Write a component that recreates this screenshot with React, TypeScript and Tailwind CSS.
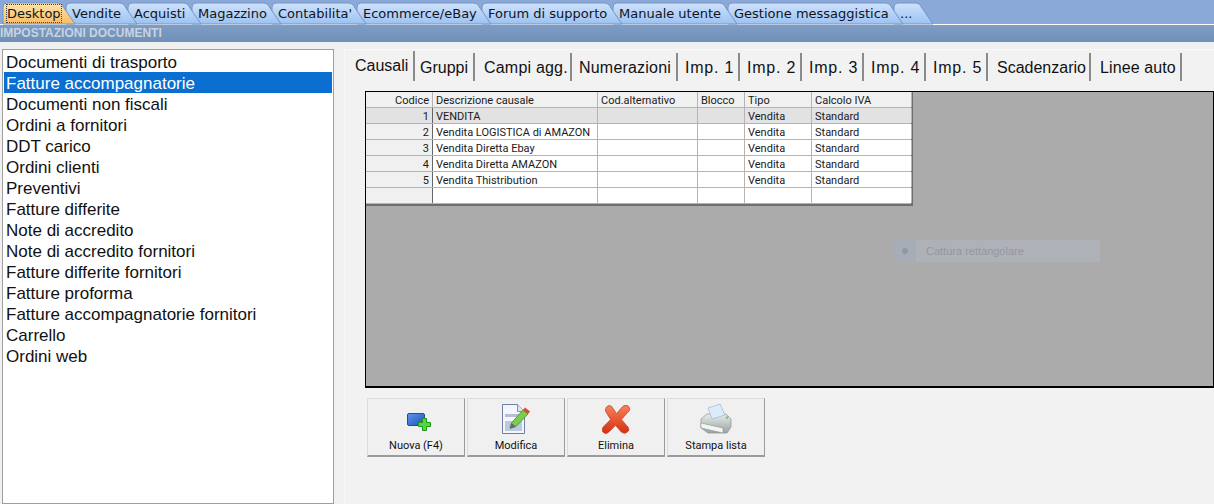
import type { ReactNode } from 'react'

const mainTabs = [
  { label: 'Desktop', w: 63 },
  { label: 'Vendite', w: 62 },
  { label: 'Acquisti', w: 64 },
  { label: 'Magazzino', w: 80 },
  { label: "Contabilita'", w: 85 },
  { label: 'Ecommerce/eBay', w: 125 },
  { label: 'Forum di supporto', w: 131 },
  { label: 'Manuale utente', w: 115 },
  { label: 'Gestione messaggistica', w: 166 },
  { label: '...', w: 30 },
]

const docs = [
  'Documenti di trasporto',
  'Fatture accompagnatorie',
  'Documenti non fiscali',
  'Ordini a fornitori',
  'DDT carico',
  'Ordini clienti',
  'Preventivi',
  'Fatture differite',
  'Note di accredito',
  'Note di accredito fornitori',
  'Fatture differite fornitori',
  'Fatture proforma',
  'Fatture accompagnatorie fornitori',
  'Carrello',
  'Ordini web',
]

const subTabs = [
  { label: 'Causali', cls: 'w-[65px] pl-[5px]' },
  { label: 'Gruppi', cls: 'w-[60px] pl-[5px]' },
  { label: 'Campi agg.', cls: 'w-[97px] pl-[9px] tracking-[0.2px]' },
  { label: 'Numerazioni', cls: 'w-[106px] pl-[7px] tracking-[0.2px]' },
  { label: 'Imp. 1', cls: 'w-[62px] pl-[7px] tracking-[0.8px]' },
  { label: 'Imp. 2', cls: 'w-[62px] pl-[7px] tracking-[0.8px]' },
  { label: 'Imp. 3', cls: 'w-[62px] pl-[7px] tracking-[0.8px]' },
  { label: 'Imp. 4', cls: 'w-[62px] pl-[7px] tracking-[0.8px]' },
  { label: 'Imp. 5', cls: 'w-[62px] pl-[7px] tracking-[0.8px]' },
  { label: 'Scadenzario', cls: 'w-[103px] pl-[9px]' },
  { label: 'Linee auto', cls: 'w-[91px] pl-[9px] tracking-[0.1px]' },
]

const rows = [
  ['1', 'VENDITA', '', '', 'Vendita', 'Standard'],
  ['2', 'Vendita LOGISTICA di AMAZON', '', '', 'Vendita', 'Standard'],
  ['3', 'Vendita Diretta Ebay', '', '', 'Vendita', 'Standard'],
  ['4', 'Vendita Diretta AMAZON', '', '', 'Vendita', 'Standard'],
  ['5', 'Vendita Thistribution', '', '', 'Vendita', 'Standard'],
  ['', '', '', '', '', ''],
]

const colWidths = ['w-[67px]', 'w-[165px]', 'w-[100px]', 'w-[47px]', 'w-[67px]', 'w-[100px]']
const headers = ['Codice', 'Descrizione causale', 'Cod.alternativo', 'Blocco', 'Tipo', 'Calcolo IVA']

function MainTab({ label, w, index }: { label: string; w: number; index: number }) {
  const h = 22
  const active = index === 0
  const d = `M0 ${h} L0 5 Q0 1 4 1 L${w - 8} 1 Q${w - 4} 1 ${w - 2} 6 L${w + 9} ${h} Z`
  return (
    <div className="relative h-[22px] shrink-0" style={{ width: w, zIndex: 20 - index }}>
      <svg className="absolute left-0 top-0 overflow-visible" width={w + 10} height={h}>
        <defs>
          <linearGradient id="tabBlue" x1="0" y1="0" x2="0" y2="1">
            <stop offset="0" stopColor="#cfe2fb" />
            <stop offset="1" stopColor="#9cc2f2" />
          </linearGradient>
          <linearGradient id="tabOrange" x1="0" y1="0" x2="0" y2="1">
            <stop offset="0" stopColor="#fde3ae" />
            <stop offset="1" stopColor="#f9bd62" />
          </linearGradient>
        </defs>
        <path d={d} fill={active ? 'url(#tabOrange)' : 'url(#tabBlue)'} stroke="#7595c4" strokeWidth="1" />
      </svg>
      <span
        className={`absolute top-[3px] whitespace-nowrap text-[13px] leading-[17px] text-[#10151c] ${
          active ? 'left-[4px] outline-1 outline-dotted outline-[#444]' : 'left-[6px]'
        }`}
      >
        {label}
      </span>
    </div>
  )
}

function GridCell({ w, className, children }: { w: string; className?: string; children?: ReactNode }) {
  return (
    <div className={`${w} h-full shrink-0 overflow-hidden whitespace-nowrap border-r border-[#b4b4b4] px-[3px] pt-px leading-[15px] ${className ?? ''}`}>
      {children}
    </div>
  )
}

function ActionButton({ label, icon }: { label: string; icon: ReactNode }) {
  return (
    <button className="flex h-[59px] w-[98px] flex-col items-center border border-[#dcdcdc] border-r-[#9b9b9b] border-b-2 border-b-[#9b9b9b] bg-[#f0f0f0] pt-[5px] font-['Roboto',sans-serif] text-[11px] text-[#111]">
      <div className="flex h-[30px] items-center justify-center">{icon}</div>
      <span className="mt-[5px] leading-[14px]">{label}</span>
    </button>
  )
}

function NewIcon() {
  return (
    <svg className="ml-[6px] mt-[6px]" width="25" height="19" viewBox="0 0 25 19">
      <defs>
        <linearGradient id="blueBox" x1="0" y1="0" x2="1" y2="1">
          <stop offset="0" stopColor="#5f97ee" />
          <stop offset="1" stopColor="#1f4fc0" />
        </linearGradient>
      </defs>
      <rect x="0.5" y="0.5" width="17" height="12" rx="1.5" fill="url(#blueBox)" stroke="#2b4a8c" />
      <path d="M15.5 5.5h4v4h4v4h-4v4h-4v-4h-4v-4h4z" fill="#59d53f" stroke="#1a9a18" />
    </svg>
  )
}

function EditIcon() {
  return (
    <svg width="28" height="30" viewBox="0 0 28 30">
      <path d="M0.5 0.5h15l7 7v22H0.5z" fill="#f4f6fb" stroke="#6f7fa5" />
      <path d="M15.5 0.5v7h7" fill="#dbe4f5" stroke="#7f8fb5" />
      <rect x="3" y="10" width="17" height="3" fill="#b5bfd8" />
      <rect x="3" y="17" width="17" height="10" fill="#bcc7e2" />
      <path d="M8 24l1.5-5L21 6l5 4L14 22.5z" fill="#79cf4a" stroke="#3f8e2e" strokeWidth="0.8" />
      <path d="M21 6l2-2.5 5 4-2 2.5z" fill="#d9483b" />
      <path d="M8 25l1.5-6 4.5 3.5z" fill="#6a6a60" />
    </svg>
  )
}

function DeleteIcon() {
  return (
    <svg width="29" height="29" viewBox="0 0 30 30">
      <defs>
        <linearGradient id="redX" x1="0" y1="0" x2="0" y2="1">
          <stop offset="0" stopColor="#f9825a" />
          <stop offset="1" stopColor="#d42f10" />
        </linearGradient>
      </defs>
      <path
        d="M6 1c2-1 4 0 5 2l4 6 6-7c2-2 4-2 6-1 2 2 2 4 1 5l-8 9 7 8c1 2 1 4-1 5-2 2-4 1-6 0l-6-7-7 7c-2 2-4 2-6 0-1-1-1-4 0-5l8-8-5-8C3 5 4 2 6 1z"
        fill="url(#redX)"
        stroke="#c23a17"
        strokeWidth="0.8"
      />
    </svg>
  )
}

function PrintIcon() {
  return (
    <svg width="32" height="32" viewBox="0 0 32 32">
      <defs>
        <linearGradient id="printerBody" x1="0" y1="0" x2="0" y2="1">
          <stop offset="0" stopColor="#e8eceb" />
          <stop offset="1" stopColor="#9aa3a3" />
        </linearGradient>
      </defs>
      <path d="M1 16l6-5h19l5 5v8l-4 6H8l-7-5z" fill="url(#printerBody)" stroke="#8a9292" strokeWidth="0.7" />
      <path d="M1 20l22 5v5L1 25z" fill="#f3f5f5" stroke="#8a9292" strokeWidth="0.6" />
      <path d="M8 5l12-4 5 11-13 4z" fill="#dcebfb" stroke="#9fb4c9" strokeWidth="0.7" />
      <circle cx="27" cy="14.5" r="1.2" fill="#6fc06f" />
    </svg>
  )
}

export default function App() {
  return (
    <div className="flex h-[504px] w-[1214px] flex-col overflow-hidden bg-[#f0f0f0] font-['Liberation_Sans',sans-serif]">
      <div className="flex h-[24px] shrink-0 items-end bg-[#8aa9d8] pl-[3px] font-['DejaVu_Sans',sans-serif]">
        {mainTabs.map((t, i) => (
          <MainTab key={t.label} label={t.label} w={t.w} index={i} />
        ))}
      </div>
      <div className="h-px shrink-0 bg-white" />
      <div className="h-[17px] shrink-0 whitespace-nowrap bg-gradient-to-b from-[#7f9cc4] to-[#6f90b8] text-[12px] leading-[17px] font-bold text-[#c9d3e0]">
        IMPOSTAZIONI DOCUMENTI
      </div>

      <div className="flex min-h-0 flex-1 pl-[2px] pt-[7px]">
        <ul className="w-[332px] shrink-0 border border-[#a0a0a0] bg-white pt-px pl-px pr-px text-[17px] text-[#111]">
          {docs.map((d, i) => (
            <li
              key={d}
              className={`h-[21px] pl-[2px] leading-[23px] ${i === 1 ? 'bg-[#0a6fd0] text-white' : ''}`}
            >
              {d}
            </li>
          ))}
        </ul>

        <div className="ml-[10px] flex-1 border-l border-t border-[#f8f8f8] bg-[#f2f2f2] pl-[5px] pt-px">
          <div className="flex h-[30px] items-stretch text-[16px] text-[#111]">
            {subTabs.map((t, i) => (
              <div
                key={t.label}
                className={`flex shrink-0 items-center whitespace-nowrap border-r-2 border-[#8b8b8b] ${t.cls} ${
                  i === 0 ? '' : 'mt-[2px] pt-[1px]'
                }`}
              >
                {t.label}
              </div>
            ))}
          </div>

          <div className="relative ml-[15px] mt-[10px] h-[297px] border-x border-t border-b-2 border-black bg-[#ababab]">
            <div className="w-[547px] border-b-2 border-r-2 border-[#6e6e6e] font-['Roboto',sans-serif] text-[11px] text-[#1a1a1a]">
              <div className="flex h-[16px] border-b border-[#b4b4b4] bg-[#f0f0f0]">
                {headers.map((h, i) => (
                  <GridCell key={h} w={colWidths[i]} className={i === 0 ? 'text-right' : ''}>
                    {h}
                  </GridCell>
                ))}
              </div>
              {rows.map((r, ri) => (
                <div
                  key={ri}
                  className={`flex h-[16px] border-b border-[#b4b4b4] ${ri === 0 ? 'bg-[#e2e2e2]' : 'bg-white'}`}
                >
                  {r.map((c, ci) => (
                    <GridCell
                      key={ci}
                      w={colWidths[ci]}
                      className={ci === 0 ? `border-r-[#666] text-right ${ri === 0 ? 'bg-[#e2e2e2]' : 'bg-[#f0f0f0]'}` : ''}
                    >
                      {c}
                    </GridCell>
                  ))}
                </div>
              ))}
            </div>

            {/* ghost tooltip left behind by the capture tool */}
            <div className="absolute left-[528px] top-[148px] flex h-[22px] w-[206px] items-center bg-[#aeb2b8] text-[11px] text-[#93979e]">
              <div className="flex h-full w-[22px] items-center justify-center bg-[#a7adb6]">
                <div className="h-[6px] w-[6px] rounded-full bg-[#94989e]" />
              </div>
              <span className="ml-[10px]">Cattura rettangolare</span>
            </div>
          </div>

          <div className="ml-[17px] mt-[10px] flex gap-[2px]">
            <ActionButton label="Nuova (F4)" icon={<NewIcon />} />
            <ActionButton label="Modifica" icon={<EditIcon />} />
            <ActionButton label="Elimina" icon={<DeleteIcon />} />
            <ActionButton label="Stampa lista" icon={<PrintIcon />} />
          </div>
        </div>
      </div>
    </div>
  )
}
